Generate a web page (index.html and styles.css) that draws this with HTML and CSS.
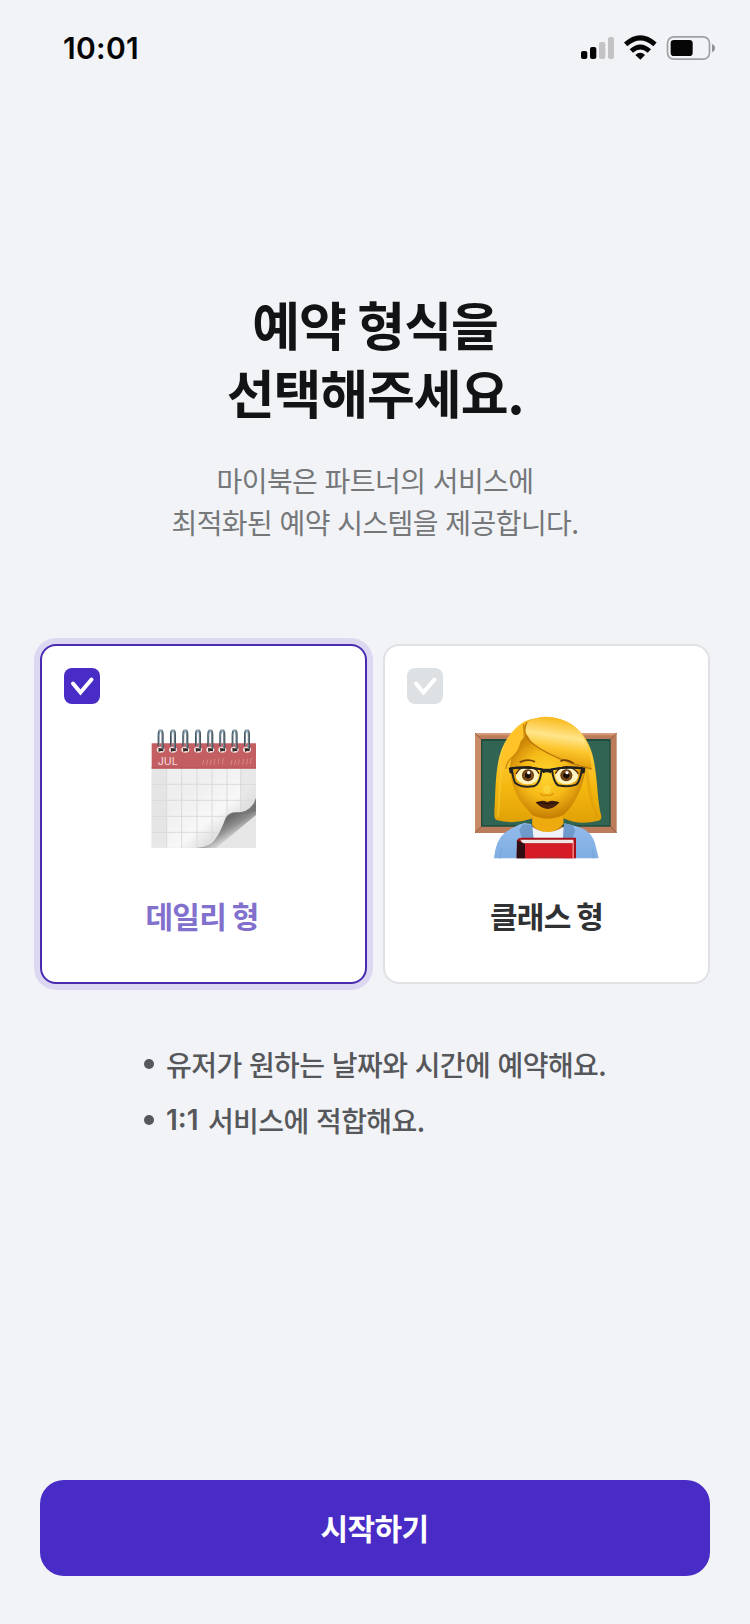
FILE: index.html
```html
<!DOCTYPE html>
<html lang="ko">
<head>
<meta charset="utf-8">
<meta name="viewport" content="width=device-width, initial-scale=1">
<title>예약 형식 선택</title>
<link rel="stylesheet" href="styles.css">
</head>
<body>
<div class="screen">
  <header class="status">
    <span class="time">10:01</span>
    <svg class="indicators" viewBox="0 0 540 120" width="180" height="40" aria-hidden="true">
      <g fill="#050505"><rect x="63" y="63" width="19" height="24" rx="6"/><rect x="90" y="51" width="19" height="36" rx="6"/></g>
      <g fill="#c3c3c6"><rect x="117" y="36" width="19" height="51" rx="6"/><rect x="144" y="21" width="18" height="66" rx="6"/></g>
      <g fill="none" stroke="#050505" stroke-width="15">
        <path d="M197 43Q241 4 285 43"/><path d="M214 63Q241 39 268 63"/>
      </g>
      <path d="M226 75Q241 61 255 75L241 89Z" fill="#050505"/>
      <rect x="322.500" y="20.500" width="126" height="67" rx="19" fill="none" stroke="#a0a0a4" stroke-width="5"/>
      <rect x="332" y="30" width="66" height="48" rx="10" fill="#050505"/>
      <path d="M456 42Q465 45 465 54T456 66Z" fill="#929296"/>
    </svg>
  </header>

  <main class="content">
    <h1 class="title">예약 형식을<br>선택해주세요.</h1>
    <p class="subtitle">마이북은 파트너의 서비스에<br>최적화된 예약 시스템을 제공합니다.</p>

    <div class="options">
      <section class="card card-selected">
        <span class="check"><svg viewBox="0 0 36 36" width="36" height="36"><path d="M9 15.500L16.500 24.500L27.500 11.500"/></svg></span>
        <svg class="picture" viewBox="-3 12 450 450" width="150" height="150" aria-hidden="true">
          <defs>
            <linearGradient id="curl" x1="262" y1="310" x2="318" y2="405" gradientUnits="userSpaceOnUse">
              <stop offset="0" stop-color="#9a9a9a"/><stop offset=".25" stop-color="#6a6a6a"/><stop offset=".5" stop-color="#8d8d8d"/><stop offset=".75" stop-color="#cfcfcf"/><stop offset="1" stop-color="#e6e6e6"/>
            </linearGradient>
            <linearGradient id="sheet" x1="200" y1="230" x2="300" y2="350" gradientUnits="userSpaceOnUse">
              <stop offset="0" stop-color="#efefef"/><stop offset=".65" stop-color="#f8f8f8"/><stop offset="1" stop-color="#dedede"/>
            </linearGradient>
            <linearGradient id="wire"><stop offset="0" stop-color="#26343e"/><stop offset=".45" stop-color="#aec2cf"/><stop offset="1" stop-color="#35434b"/></linearGradient>
            <g id="ring">
              <ellipse cx="0" cy="119" rx="12" ry="9" fill="#f2e8e6"/>
              <path d="M-7 113Q3 118 8 109V124Q0 122-6 126Z" fill="#3b2626"/>
              <path d="M-9 108V74Q-9 58 0 58T9 74V117H2V75Q2 66 0 66T-3 75V108Z" fill="url(#wire)"/>
              <path d="M-6 78Q-5 62 1 61" stroke="#7391a6" stroke-width="2" fill="none"/>
            </g>
          </defs>
          <path d="M65 170H378V414H65Z" fill="#e6e6e6"/>
          <path d="M65 172H378V270Q365 302 330 307Q298 300 286 329Q270 365 252 386Q234 409 199 413H65Z" fill="url(#sheet)"/>
          <path d="M65 176H110V413H65ZM332 176H378V270Q365 300 332 306Z" fill="#dcdcdc" opacity=".55"/>
          <path d="M110 176V413M155 176V413M201 176V411M246 176V388M291 176V317M332 176V305M65 223H378M65 271H378M65 319H289M65 367H265" stroke="#dadada" stroke-width="3" fill="none"/>
          <path d="M378 263Q369 306 325 307Q296 304 287 324Q263 389 239 403Q224 412 197 414H259L285 392L378 315Z" fill="url(#curl)"/>
          <path d="M378 266Q365 302 328 308Q347 317 378 302Z" fill="#777"/>
          <path d="M65 100H378V175H65Z" fill="#c35e62"/>
          <path d="M65 172H378V176H65Z" fill="#b9585b"/>
          <text x="83" y="166" class="month" textLength="60" lengthAdjust="spacingAndGlyphs">JUL</text>
          <path d="M218 165L221 150M230 165L233 149M241 165L244 148M252 164L255 147M264 163L267 146M277 162L280 145M303 165L306 150M314 165L317 149M325 164L328 148M338 164L341 147M350 163L353 146M361 162L364 144" stroke="#d88787" stroke-width="3"/>
          <use href="#ring" x="92"/><use href="#ring" x="129"/><use href="#ring" x="166"/><use href="#ring" x="204"/><use href="#ring" x="241"/><use href="#ring" x="277"/><use href="#ring" x="314"/><use href="#ring" x="351"/>
        </svg>
        <h2 class="label">데일리 형</h2>
      </section>

      <section class="card">
        <span class="check"><svg viewBox="0 0 36 36" width="36" height="36"><path d="M9 15.500L16.500 24.500L27.500 11.500"/></svg></span>
        <svg class="picture" viewBox="36 42 450 450" width="150" height="150" aria-hidden="true">
          <defs>
            <linearGradient id="hair" x1="250" y1="50" x2="250" y2="370" gradientUnits="userSpaceOnUse">
              <stop offset="0" stop-color="#f8b414"/><stop offset=".25" stop-color="#ffd246"/><stop offset=".65" stop-color="#f5b810"/><stop offset="1" stop-color="#e0a006"/>
            </linearGradient>
            <linearGradient id="fringe" x1="300" y1="55" x2="280" y2="195" gradientUnits="userSpaceOnUse">
              <stop offset="0" stop-color="#f9b91c"/><stop offset=".38" stop-color="#ffe58a"/><stop offset=".65" stop-color="#fcc52b"/><stop offset="1" stop-color="#e29b06"/>
            </linearGradient>
            <radialGradient id="face" cx="258" cy="225" r="125" gradientUnits="userSpaceOnUse">
              <stop offset="0" stop-color="#ffd52f"/><stop offset=".55" stop-color="#f6bb18"/><stop offset="1" stop-color="#c98204"/>
            </radialGradient>
            <radialGradient id="iris"><stop offset="0" stop-color="#160a03"/><stop offset=".5" stop-color="#241005"/><stop offset=".6" stop-color="#8a5a1c"/><stop offset="1" stop-color="#5a300d"/></radialGradient>
            <linearGradient id="coat" x1="0" y1="370" x2="0" y2="475" gradientUnits="userSpaceOnUse"><stop offset="0" stop-color="#94bcec"/><stop offset="1" stop-color="#7fade2"/></linearGradient>
          </defs>
          <path d="M45 99H470V399H45Z" fill="#bc7c5b"/>
          <path d="M45 99H470V106H45Z" fill="#d59a78"/>
          <path d="M45 99L65 118V379L45 399Z" fill="#c98a68"/>
          <path d="M63 117H452V380H63Z" fill="#204c3d"/>
          <path d="M67 123H448V376H67Z" fill="#316452"/>
          <path d="M45 99L63 117M470 99L452 117M45 399L63 380M470 399L452 380" stroke="#78472f" stroke-width="2"/>

          <path d="M192 65Q273 33 337 75Q388 110 402 184C414 250 411 299 424 349Q425 361 412 363Q357 376 314 356H214Q164 374 112 361Q102 358 103 340C108 248 104 167 145 111Q164 82 192 65Z" fill="url(#hair)"/>
          <path d="M190 70Q137 108 125 197Q119 270 114 351" stroke="#ffd647" stroke-width="6" opacity=".4" fill="none"/>
          <path d="M380 205Q385 285 412 352" stroke="#dc9808" stroke-width="9" opacity=".45" fill="none"/>
          <path d="M153 210Q162 284 217 345V377Q238 400 263 400Q295 399 310 371V345Q361 299 373 203Z" fill="#c98204"/>
          <path d="M201 103Q145 155 151 210C155 286 202 349 260 353C324 353 367 285 377 207Q285 172 201 103Z" fill="url(#face)"/>
          <path d="M217 345Q262 368 310 345V371Q287 397 260 397Q237 397 217 375Z" fill="#efaa10"/>
          <path d="M202 67C184 98 214 139 279 167Q348 190 395 208Q388 94 318 64Q250 35 202 67Z" fill="url(#fringe)"/>
          <path d="M201 67Q183 96 211 126Q277 178 395 207" stroke="#ba760a" stroke-width="4" fill="none"/>
          <path d="M190 72C184 125 180 151 150 177Q127 202 126 242C119 181 120 113 190 72Z" fill="#ffc328"/>
          <path d="M190 72C198 125 188 144 160 169Q139 185 137 207" stroke="#cb8909" stroke-width="4" fill="none"/>

          <path d="M179 187Q202 175 225 185M301 184Q316 174 341 190" stroke="#70400a" stroke-width="5" fill="none"/>
          <g fill="#fff3bd"><ellipse cx="202" cy="227" rx="34" ry="26"/><ellipse cx="320" cy="227" rx="34" ry="26"/></g>
          <circle cx="204" cy="226" r="18" fill="url(#iris)"/><circle cx="319" cy="226" r="18" fill="url(#iris)"/>
          <circle cx="206" cy="218" r="5" fill="#fff"/><circle cx="321" cy="218" r="5" fill="#fff"/>
          <path d="M168 222Q177 201 204 200Q227 201 237 221M286 221Q296 201 320 200Q344 203 355 222" stroke="#472508" stroke-width="4" fill="none"/>
          <path d="M155 205Q198 199 245 208Q240 256 219 259Q185 264 166 249Q160 240 155 205ZM276 208Q321 199 366 205Q360 247 348 254Q325 263 294 256Q280 246 276 208Z" fill="none" stroke="#242421" stroke-width="6"/>
          <path d="M146 203Q194 195 247 206H275Q322 195 376 203L374 218L366 221L363 208Q322 202 278 211L272 220Q260 213 250 220L244 211Q198 202 158 208L157 222L149 219Z" fill="#20201e"/>
          <path d="M240 280Q249 290 261 285Q273 290 281 279" stroke="#e59a10" stroke-width="5" fill="none"/>
          <ellipse cx="261" cy="268" rx="12" ry="13" fill="#ffe052" opacity=".5"/>
          <path d="M227 307Q244 300 255 303L262 306L270 303Q282 300 298 307Q283 327 262 327Q242 325 227 307Z" fill="#49220b"/>
          <path d="M230 308Q263 314 296 308" stroke="#241006" stroke-width="3" fill="none"/>

          <path d="M217 381Q260 411 311 381V475H217Z" fill="#edf3f7"/>
          <path d="M193 369L213 372L221 416V475H102Q108 419 133 400Q155 381 193 369ZM314 370L349 379Q394 391 405 430L416 475H309V412Z" fill="url(#coat)"/>
          <path d="M188 373L216 374L221 418H187L178 390ZM313 370L338 377L346 391L338 415H309Z" fill="#6e9bcc"/>
          <path d="M126 444L119 475M396 444L401 475" stroke="#7aa7da" stroke-width="4"/>
          <path d="M171 421Q174 413 185 413H348V475H170Z" fill="#a91019"/>
          <path d="M181 419H340V430H188Z" fill="#f0e8e6"/>
          <path d="M171 421L195 432V475H170Z" fill="#300c13"/>
          <path d="M195 431H337V475H195Z" fill="#d51b25"/>
          <path d="M337 431L342 418V475H337Z" fill="#f17a7c"/>
          <path d="M234 472H307" stroke="#9e3434" stroke-width="4" stroke-dasharray="13 4"/>
        </svg>
        <h2 class="label">클래스 형</h2>
      </section>
    </div>

    <ul class="notes">
      <li>유저가 원하는 날짜와 시간에 예약해요.</li>
      <li><span class="ratio">1:1</span> 서비스에 적합해요.</li>
    </ul>
  </main>

  <footer class="footer"><button class="start" type="button">시작하기</button></footer>
</div>
</body>
</html>
```
FILE: styles.css
```css
* { box-sizing: border-box; }
body { margin: 0; background: #f1f3f7; }
.screen {
  display: flex;
  flex-direction: column;
  width: 750px;
  height: 1624px;
  padding: 0 40px 48px;
  font-family: "Noto Sans CJK KR", sans-serif;
  background: #f1f3f7;
}
.status {
  display: flex;
  justify-content: space-between;
  height: 290px;
  margin-right: -30px;
  padding: 30px 0 0 23px;
}
.time {
  font: 600 30px/36px Inter, sans-serif;
  letter-spacing: 0.3px;
  color: #050505;
}
.content { flex: 1; }
.title {
  margin: 0;
  font-size: 52px;
  font-weight: 700;
  line-height: 68px;
  letter-spacing: -0.02em;
  word-spacing: -2px;
  text-align: center;
  color: #121314;
}
.subtitle {
  margin: 33px 0 0;
  font-size: 28px;
  font-weight: 400;
  line-height: 42px;
  letter-spacing: -0.02em;
  text-align: center;
  color: #757779;
}
.options {
  display: grid;
  grid-template-columns: 1fr 1fr;
  gap: 16px;
  margin-top: 101px;
}
.card {
  display: flex;
  flex-direction: column;
  align-items: center;
  height: 340px;
  padding: 22px;
  border: 2px solid #dfe1e5;
  border-radius: 16px;
  background: #fff;
}
.card-selected {
  border-color: #492bb2;
  box-shadow: 0 0 0 6px #ddd8f1;
}
.check {
  align-self: flex-start;
  width: 36px;
  height: 36px;
  border-radius: 8px;
  background: #dde1e4;
}
.check svg { display: block; }
.check path {
  fill: none;
  stroke: #fff;
  stroke-width: 4;
  stroke-linecap: round;
}
.card-selected .check { background: #492bc6; }
.picture {
  display: block;
  flex: none;
  margin-top: 10px;
}
.month {
  font: 29px Inter, sans-serif;
  fill: #f6dedd;
}
.label {
  margin: 29px 0 0;
  font-size: 30px;
  font-weight: 700;
  line-height: 44px;
  letter-spacing: -0.025em;
  word-spacing: -2px;
  color: #303132;
}
.card-selected .label {
  margin-right: 3px;
  color: #8170cc;
}
.notes {
  display: grid;
  gap: 14px;
  margin: 59px 0 0;
  padding: 0 0 0 104px;
  list-style: none;
  font-size: 28px;
  font-weight: 500;
  line-height: 42px;
  letter-spacing: -0.02em;
  color: #56575b;
}
.notes li {
  display: flex;
  align-items: center;
  white-space: pre;
}
.notes li::before {
  content: "";
  width: 10px;
  height: 10px;
  margin-right: 12px;
  border-radius: 50%;
  background: #56575b;
}
.ratio {
  margin-right: 2px;
  font-family: Inter, sans-serif;
  font-weight: 600;
  letter-spacing: 0;
}
.start {
  display: block;
  width: 100%;
  height: 96px;
  padding: 0 1px 2px 0;
  border: 0;
  border-radius: 24px;
  font: 700 30px/44px "Noto Sans CJK KR", sans-serif;
  letter-spacing: -0.02em;
  color: #fff;
  background: #492bc6;
}
```
